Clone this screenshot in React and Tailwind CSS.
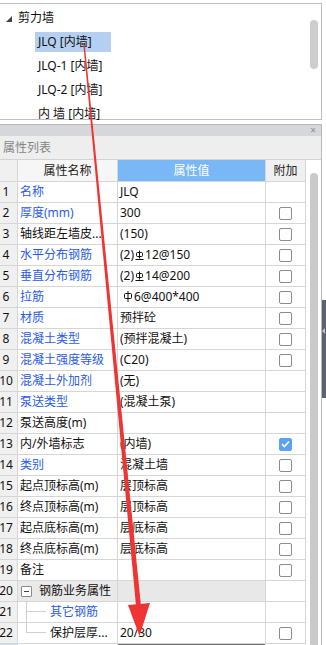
import React from 'react';

const FONT = { fontFamily: '"Noto Sans", "Noto Sans CJK SC", sans-serif' };

// HRB400 style rebar symbol
const Rebar3 = () => (
  <svg width="9" height="11" viewBox="0 0 9 11" className="inline-block align-[-1px] mx-[1px]">
    <line x1="4.5" y1="0.5" x2="4.5" y2="8.5" stroke="#111" strokeWidth="1" />
    <rect x="1.5" y="2.5" width="6" height="4" rx="1" fill="none" stroke="#111" strokeWidth="1" />
    <line x1="0.5" y1="9.5" x2="8.5" y2="9.5" stroke="#111" strokeWidth="1" />
  </svg>
);

// HPB300 style rebar symbol
const Rebar1 = () => (
  <svg width="10" height="11" viewBox="0 0 10 11" className="inline-block align-[-1px] mr-[1px]">
    <line x1="5" y1="0" x2="5" y2="11" stroke="#111" strokeWidth="1" />
    <rect x="1.5" y="2.5" width="7" height="5" rx="1" fill="none" stroke="#111" strokeWidth="1" />
  </svg>
);

const Checkbox = ({ checked }) =>
  checked ? (
    <span className="w-[13px] h-[13px] rounded-[2px] bg-[#5aa2f6] border border-[#5aa2f6] flex items-center justify-center">
      <svg width="9" height="8" viewBox="0 0 9 8">
        <path d="M1 4.2 L3.4 6.5 L8 1.5" fill="none" stroke="#fff" strokeWidth="1.6" />
      </svg>
    </span>
  ) : (
    <span className="w-[13px] h-[13px] rounded-[2px] bg-white border border-[#8c8c8c]" />
  );

const rows = [
  { n: 1, name: '名称', blue: true, value: 'JLQ', cb: null },
  { n: 2, name: '厚度(mm)', blue: true, value: '300', cb: false },
  { n: 3, name: '轴线距左墙皮...', value: '(150)', cb: false },
  { n: 4, name: '水平分布钢筋', blue: true, value: <>(2)<Rebar3 />12@150</>, cb: false },
  { n: 5, name: '垂直分布钢筋', blue: true, value: <>(2)<Rebar3 />14@200</>, cb: false },
  { n: 6, name: '拉筋', blue: true, value: <span className="pl-[3px]"><Rebar1 />6@400*400</span>, cb: false },
  { n: 7, name: '材质', blue: true, value: '预拌砼', cb: false },
  { n: 8, name: '混凝土类型', blue: true, value: '(预拌混凝土)', cb: false },
  { n: 9, name: '混凝土强度等级', blue: true, value: '(C20)', cb: false },
  { n: 10, name: '混凝土外加剂', blue: true, value: '(无)', cb: null },
  { n: 11, name: '泵送类型', blue: true, value: '(混凝土泵)', cb: null },
  { n: 12, name: '泵送高度(m)', value: '', cb: null },
  { n: 13, name: '内/外墙标志', value: '(内墙)', cb: true },
  { n: 14, name: '类别', blue: true, value: '混凝土墙', cb: false },
  { n: 15, name: '起点顶标高(m)', value: '层顶标高', cb: false },
  { n: 16, name: '终点顶标高(m)', value: '层顶标高', cb: false },
  { n: 17, name: '起点底标高(m)', value: '层底标高', cb: false },
  { n: 18, name: '终点底标高(m)', value: '层底标高', cb: false },
  { n: 19, name: '备注', value: '', cb: false },
];

const Row = ({ n, children, value, cb, gray, numBg = 'bg-[#f0f0f0]', valueCls = '' }) => (
  <div className="flex h-[21px] text-[12px] leading-none text-[#111]">
    <div className={`w-[18px] shrink-0 border-r border-b border-[#d6d6d6] ${numBg} flex items-center justify-center pr-[5px]`}>{n}</div>
    <div className={`w-[100px] shrink-0 border-r border-b border-[#d6d6d6] ${gray ? 'bg-[#e9e9e9]' : 'bg-white'} flex items-center pl-[2px] whitespace-nowrap overflow-hidden`}>
      {children}
    </div>
    <div className={`w-[148px] shrink-0 border-r border-b border-[#d6d6d6] ${gray ? 'bg-[#e8e8e8]' : 'bg-white'} flex items-center pl-[2px] whitespace-nowrap overflow-hidden ${valueCls}`}>
      {value}
    </div>
    <div className="w-[40px] shrink-0 border-r border-b border-[#d6d6d6] bg-white flex items-center justify-center">
      {cb !== null && cb !== undefined && <Checkbox checked={cb} />}
    </div>
  </div>
);

export default function App() {
  return (
    <div className="relative w-[326px] h-[645px] overflow-hidden bg-white" style={FONT}>
      {/* tree panel */}
      <div className="mt-[3px] w-[322px] h-[117px] border-t border-b border-r border-[#bdbdbd] flex">
        <div className="flex-1 pt-[2px] text-[12px] text-[#111] leading-none">
          <div className="h-[24px] flex items-center">
            <svg width="6" height="6" viewBox="0 0 6 6" className="ml-[6px] mt-[2px]">
              <polygon points="6,0 6,6 0,6" fill="#444" />
            </svg>
            <span className="ml-[6px]">剪力墙</span>
          </div>
          <div className="h-[24px] flex items-center pl-[35px]">
            <span className="w-[76px] h-[20px] bg-[#b5cff0] flex items-center pl-[3px]">JLQ [内墙]</span>
          </div>
          <div className="h-[24px] flex items-center pl-[38px]">JLQ-1 [内墙]</div>
          <div className="h-[24px] flex items-center pl-[38px]">JLQ-2 [内墙]</div>
          <div className="h-[24px] flex items-center pl-[38px]">内 墙 [内墙]</div>
        </div>
        <div className="w-[13px] pt-[16px] pl-[2px]">
          <div className="w-[8px] h-[49px] rounded-full bg-[#cdcdcd]" />
        </div>
      </div>

      {/* property panel */}
      <div className="mt-[4px] w-[322px] border-t border-r border-[#b8b8b8]">
        <div className="h-[11px] bg-[#d6d7db] flex items-end justify-end pr-[5px]">
          <span className="text-[10px] leading-none text-[#8a8a8a] mb-[1px]">×</span>
        </div>
        <div className="h-[24px] bg-[#eeeeee] border-b border-[#d2d2d2] flex items-center pl-[3px] text-[12px] text-[#858585] leading-none">
          属性列表
        </div>
        <div className="flex">
          <div className="w-[306px] shrink-0">
            {/* header */}
            <div className="flex h-[22px] text-[12px] leading-none text-[#222]">
              <div className="w-[18px] shrink-0 border-r border-b border-[#d6d6d6] bg-[#f0f0f0]" />
              <div className="w-[100px] shrink-0 border-r border-b border-[#d6d6d6] bg-[#f6f6f6] flex items-center justify-center">属性名称</div>
              <div className="w-[148px] shrink-0 border-r border-b border-[#d6d6d6] bg-[#79b7f6] text-white flex items-center justify-center">属性值</div>
              <div className="w-[40px] shrink-0 border-r border-b border-[#d6d6d6] bg-[#f0f0f0] flex items-center justify-center">附加</div>
            </div>
            {rows.map((r) => (
              <Row key={r.n} n={r.n} value={r.value} cb={r.cb}>
                <span className={r.blue ? 'text-[#2a5be8]' : ''}>{r.name}</span>
              </Row>
            ))}
            <Row n={20} value="" cb={null} gray>
              <span className="ml-[1px] w-[11px] h-[11px] border border-[#8a8a8a] rounded-[1px] bg-white flex items-center justify-center">
                <span className="w-[5px] h-px bg-[#444]" />
              </span>
              <span className="ml-[7px]">钢筋业务属性</span>
            </Row>
            <Row n={21} value="" cb={null}>
              <span className="ml-[6px] w-[20px] self-stretch flex flex-col">
                <span className="h-1/2 border-l border-b border-[#cfcfcf]" />
                <span className="h-1/2 border-l border-[#cfcfcf]" />
              </span>
              <span className="ml-[4px] text-[#2a5be8]">其它钢筋</span>
            </Row>
            <Row n={22} value="20/30" cb={false}>
              <span className="ml-[6px] w-[20px] self-stretch flex flex-col">
                <span className="h-1/2 border-l border-b border-[#cfcfcf]" />
              </span>
              <span className="ml-[4px]">保护层厚...</span>
            </Row>
            <div className="flex h-[21px]">
              <div className="w-[18px] shrink-0 bg-[#c9dcf2]" />
              <div className="w-[100px] shrink-0 bg-white" />
              <div className="w-[147px] shrink-0 border-t-2 border-[#6e6e6e]" />
            </div>
          </div>
          <div className="w-[4px]" />
          <div className="w-[8px] mt-[13px] rounded-t-full bg-[#cacaca] h-[520px]" />
        </div>
      </div>

      {/* right edge tab */}
      <div className="absolute right-0 top-[300px] w-[4px] h-[98px] bg-[#5c6272] flex items-start">
        <span className="mt-[28px] w-0 h-0 border-y-[3px] border-y-transparent border-r-[3px] border-r-[#b9bec8]" />
      </div>

      {/* red annotation arrow */}
      <svg className="absolute left-0 top-0 pointer-events-none" width="326" height="645" viewBox="0 0 326 645">
        <polygon points="83.4,45 84.8,45 141.2,608 136.2,608" fill="#ef3434" />
        <polygon points="128,605 150,603 139.5,636" fill="#ef3434" />
      </svg>
    </div>
  );
}
